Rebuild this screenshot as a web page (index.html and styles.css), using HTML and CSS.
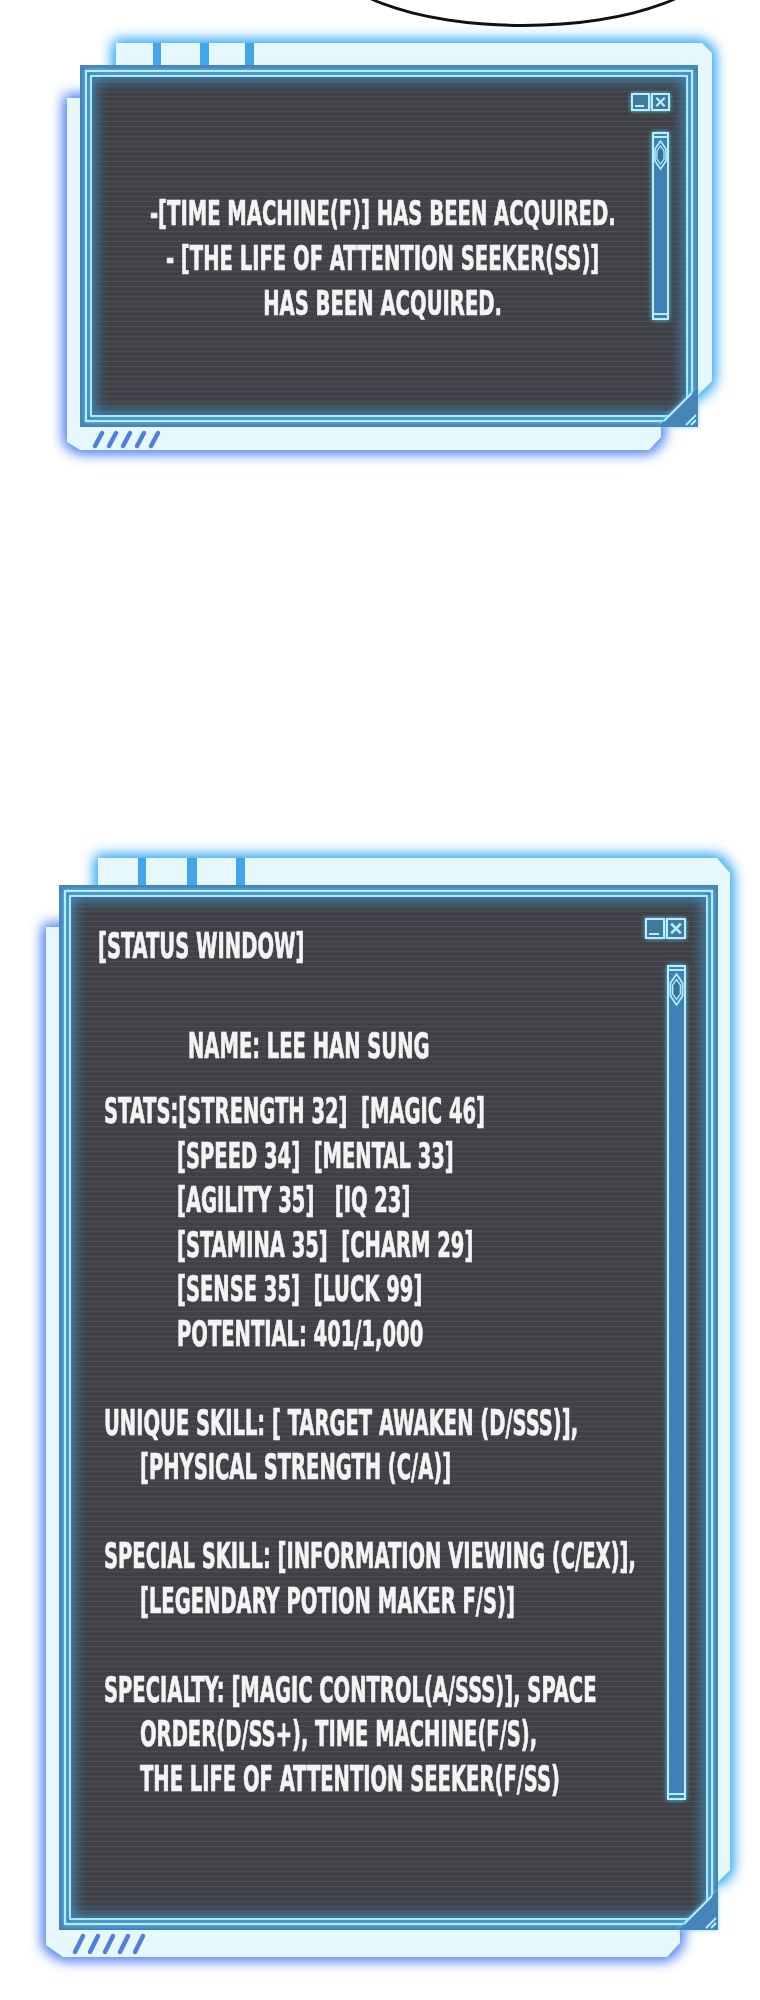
FILE: index.html
```html
<!DOCTYPE html>
<html lang="en">
<head>
<meta charset="utf-8">
<title>Status Window</title>
<link rel="stylesheet" href="styles.css">
</head>
<body>
<main class="page">

  <section class="win win-top">
    <svg class="frame" width="760" height="470" viewBox="0 0 760 470" aria-hidden="true">
      <defs>
        <filter id="glow1" x="-20%" y="-20%" width="140%" height="140%">
          <feMorphology operator="dilate" radius="2"/>
          <feGaussianBlur stdDeviation="7"/>
        </filter>
      </defs>
      <polygon points="67,98 661,98 661,437 649,450 80,450 67,442" fill="#4a7ef0" filter="url(#glow1)"/>
      <polygon points="67,98 661,98 661,437 649,450 80,450 67,442" fill="#4a7ef0" filter="url(#glow1)" opacity="0.6"/>
      <polygon points="116,43 702,43 712,53 712,381 697,396 116,396" fill="#33a6f2" filter="url(#glow1)"/>
      <polygon points="116,43 702,43 712,53 712,381 697,396 116,396" fill="#33a6f2" filter="url(#glow1)" opacity="0.6"/>
      <polygon points="67,98 661,98 661,437 649,450 80,450 67,442" fill="#e7f8fd"/>
      <polygon points="116,43 702,43 712,53 712,381 697,396 116,396" fill="#e7f8fd"/>
      <rect x="153" y="43" width="8" height="22" fill="#43a6ea"/>
      <rect x="200" y="43" width="9" height="22" fill="#43a6ea"/>
      <rect x="245" y="43" width="9" height="22" fill="#43a6ea"/>
      <g stroke="#4f80de" stroke-width="4.5" stroke-linecap="round">
        <line x1="95" y1="446" x2="102" y2="433"/>
        <line x1="109" y1="446" x2="116" y2="433"/>
        <line x1="123" y1="446" x2="130" y2="433"/>
        <line x1="137" y1="446" x2="144" y2="433"/>
        <line x1="151" y1="446" x2="158" y2="433"/>
      </g>
    </svg>
    <div class="bubble"></div>

    <div class="panel panel-top">
      <div class="rim">
        <div class="screen">
          <div class="body body-center">
            <div class="ln"><span>-[TIME MACHINE(F)] HAS BEEN ACQUIRED.</span></div>
            <div class="ln"><span>- [THE LIFE OF ATTENTION SEEKER(SS)]</span></div>
            <div class="ln"><span>HAS BEEN ACQUIRED.</span></div>
          </div>
          <aside class="side side-top">
            <div class="ctrls">
              <span class="btn btn-min"></span>
              <span class="btn btn-x"><svg viewBox="0 0 10 10"><path d="M2 2 L8 8 M8 2 L2 8"/></svg></span>
            </div>
            <div class="scroll">
              <span class="cap"></span>
              <svg class="knob" viewBox="0 0 13 30"><polygon class="outer" points="6.5,1 12,9 12,21 6.5,29 1,21 1,9"/><polygon class="inner" points="6.5,6 10,11 10,19 6.5,24 3,19 3,11"/></svg>
              <span class="cap end"></span>
            </div>
          </aside>
        </div>
      </div>
      <svg class="corner" viewBox="0 0 40 40" aria-hidden="true">
        <polygon points="40,0 40,40 0,40" fill="#4784b8"/>
        <path d="M34 6 L6 34 M29 11 L11 29 M38 28 L28 38 M38 33 L33 38" stroke="#b4f1ff" stroke-width="1.8" fill="none"/>
      </svg>
    </div>
  </section>

  <section class="win win-status">
    <svg class="frame" width="760" height="1170" viewBox="0 0 760 1170" aria-hidden="true">
      <defs>
        <filter id="glow2" x="-20%" y="-20%" width="140%" height="140%">
          <feMorphology operator="dilate" radius="2"/>
          <feGaussianBlur stdDeviation="7"/>
        </filter>
      </defs>
      <polygon points="46,97 680,97 680,1113 667,1127 63,1127 46,1115" fill="#4a7ef0" filter="url(#glow2)"/>
      <polygon points="46,97 680,97 680,1113 667,1127 63,1127 46,1115" fill="#4a7ef0" filter="url(#glow2)" opacity="0.6"/>
      <polygon points="98,28 717,28 730,43 730,1040 718,1052 98,1052" fill="#33a6f2" filter="url(#glow2)"/>
      <polygon points="98,28 717,28 730,43 730,1040 718,1052 98,1052" fill="#33a6f2" filter="url(#glow2)" opacity="0.6"/>
      <polygon points="46,97 680,97 680,1113 667,1127 63,1127 46,1115" fill="#e7f8fd"/>
      <polygon points="98,28 717,28 730,43 730,1040 718,1052 98,1052" fill="#e7f8fd"/>
      <rect x="138" y="28" width="8" height="27" fill="#43a6ea"/>
      <rect x="187" y="28" width="10" height="27" fill="#43a6ea"/>
      <rect x="236" y="28" width="9" height="27" fill="#43a6ea"/>
      <g stroke="#4f80de" stroke-width="4.5" stroke-linecap="round">
        <line x1="75" y1="1122" x2="83" y2="1106"/>
        <line x1="90" y1="1122" x2="98" y2="1106"/>
        <line x1="105" y1="1122" x2="113" y2="1106"/>
        <line x1="120" y1="1122" x2="128" y2="1106"/>
        <line x1="135" y1="1122" x2="143" y2="1106"/>
      </g>
    </svg>

    <div class="panel panel-status">
      <div class="rim">
        <div class="screen">
          <div class="body body-left">
            <div class="ln i0 after-title"><span>[STATUS WINDOW]</span></div>
            <div class="ln iname after-name"><span>NAME: LEE HAN SUNG</span></div>
            <div class="ln i1"><span>STATS:[STRENGTH 32]  [MAGIC 46]</span></div>
            <div class="ln i2"><span>[SPEED 34]  [MENTAL 33]</span></div>
            <div class="ln i2"><span>[AGILITY 35]   [IQ 23]</span></div>
            <div class="ln i2"><span>[STAMINA 35]  [CHARM 29]</span></div>
            <div class="ln i2"><span>[SENSE 35]  [LUCK 99]</span></div>
            <div class="ln i2"><span>POTENTIAL: 401/1,000</span></div>
            <div class="ln i1 gap"><span>UNIQUE SKILL: [ TARGET AWAKEN (D/SSS)],</span></div>
            <div class="ln i3"><span>[PHYSICAL STRENGTH (C/A)]</span></div>
            <div class="ln i1 gap"><span>SPECIAL SKILL: [INFORMATION VIEWING (C/EX)],</span></div>
            <div class="ln i3"><span>[LEGENDARY POTION MAKER F/S)]</span></div>
            <div class="ln i1 gap"><span>SPECIALTY: [MAGIC CONTROL(A/SSS)], SPACE</span></div>
            <div class="ln i3"><span>ORDER(D/SS+), TIME MACHINE(F/S),</span></div>
            <div class="ln i3"><span>THE LIFE OF ATTENTION SEEKER(F/SS)</span></div>
          </div>
          <aside class="side side-status">
            <div class="ctrls">
              <span class="btn btn-min"></span>
              <span class="btn btn-x"><svg viewBox="0 0 10 10"><path d="M2 2 L8 8 M8 2 L2 8"/></svg></span>
            </div>
            <div class="scroll">
              <span class="cap"></span>
              <svg class="knob" viewBox="0 0 13 30"><polygon class="outer" points="6.5,1 12,9 12,21 6.5,29 1,21 1,9"/><polygon class="inner" points="6.5,6 10,11 10,19 6.5,24 3,19 3,11"/></svg>
              <span class="cap end"></span>
            </div>
          </aside>
        </div>
      </div>
      <svg class="corner" viewBox="0 0 40 40" aria-hidden="true">
        <polygon points="40,0 40,40 0,40" fill="#4784b8"/>
        <path d="M34 6 L6 34 M29 11 L11 29 M38 28 L28 38 M38 33 L33 38" stroke="#b4f1ff" stroke-width="1.8" fill="none"/>
      </svg>
    </div>
  </section>

</main>
</body>
</html>
```

FILE: styles.css
```css
* { box-sizing: border-box; }

html, body {
  margin: 0;
  background: #ffffff;
}

body {
  font-family: "DejaVu Sans Condensed", "DejaVu Sans", "Liberation Sans", sans-serif;
  color: #f4f4f4;
}

.page {
  width: 760px;
  height: 2000px;
  overflow: hidden;
}

.win {
  position: relative;
}

.win-top {
  height: 470px;
  padding-top: 65px;
  padding-left: 80px;
}

.win-status {
  margin-top: 360px;
  height: 1170px;
  padding-top: 55px;
  padding-left: 59px;
}

.frame {
  position: absolute;
  left: 0;
  top: 0;
  overflow: visible;
  z-index: 0;
}

.bubble {
  position: absolute;
  left: 323px;
  top: -125px;
  width: 400px;
  height: 152px;
  border: 3px solid #111;
  border-radius: 50%;
  background: #fff;
  z-index: 1;
}

/* dark window */
.panel {
  position: relative;
  z-index: 2;
  background: #4784b8;
  padding: 5px;
}

.panel-top { width: 618px; height: 362px; }
.panel-status { width: 659px; height: 1045px; }

.rim {
  height: 100%;
  border: 2px solid #b4f1ff;
  padding: 3px;
  background: #3d7bb0;
  box-shadow: 0 0 4px rgba(120, 220, 255, 0.8), inset 0 0 3px rgba(120, 220, 255, 0.6);
}

.screen {
  height: 100%;
  display: flex;
  border: 2px solid #a6ebfb;
  background-color: #404247;
  background-image: repeating-linear-gradient(180deg, #3f4146 0px, #3f4146 4px, #4b4d53 4px, #4b4d53 5px);
  box-shadow: inset 0 0 14px 3px rgba(70, 150, 210, 0.85), 0 0 5px rgba(120, 220, 255, 0.7);
}

.corner {
  position: absolute;
  right: 0;
  bottom: 0;
  width: 40px;
  height: 40px;
  filter: drop-shadow(0 0 2px rgba(110, 215, 255, 0.9));
}

/* text */
.body {
  flex: 1;
  min-width: 0;
}

.ln {
  white-space: pre;
  font-weight: 700;
  -webkit-text-stroke: 0.7px #f4f4f4;
}

.ln > span {
  display: inline-block;
  transform: scaleX(var(--sx));
  transform-origin: 0 50%;
}

.body-center {
  padding: 114px 0 0 43px;
  --sx: 0.64;
}

.body-center .ln {
  display: flex;
  justify-content: center;
  height: 45px;
  line-height: 45px;
  font-size: 34px;
}

.body-center .ln > span {
  transform-origin: 50% 50%;
}

.body-left {
  padding-top: 27px;
  --sx: 0.62;
}

.body-left .ln {
  height: 44.5px;
  line-height: 44.5px;
  font-size: 35px;
}

.i0 { padding-left: 27px; }
.iname { padding-left: 117px; }
.i1 { padding-left: 33px; }
.i2 { padding-left: 106px; }
.i3 { padding-left: 69px; }

.after-title { margin-bottom: 55.5px; }
.after-name { margin-bottom: 20.5px; }
.gap { margin-top: 44.5px; }

/* side controls */
.side {
  display: flex;
  flex-direction: column;
  align-items: flex-end;
}

.side-top {
  width: 55px;
  padding: 16px 16px 0 0;
}

.side-status {
  width: 60px;
  padding: 21px 20px 0 0;
}

.ctrls {
  display: flex;
  gap: 1px;
  filter: drop-shadow(0 0 2px rgba(110, 215, 255, 0.9));
}

.btn {
  position: relative;
  display: block;
  width: 19px;
  height: 18px;
  border: 2px solid #b4f1ff;
  background: #45789f;
}

.side-status .btn {
  width: 20px;
  height: 21px;
}

.btn-min::after {
  content: "";
  position: absolute;
  left: 2px;
  right: 4px;
  bottom: 2px;
  height: 2px;
  background: #b4f1ff;
}

.btn-x svg {
  display: block;
  width: 100%;
  height: 100%;
}

.btn-x path {
  stroke: #b4f1ff;
  stroke-width: 1.6;
  fill: none;
}

.scroll {
  display: flex;
  flex-direction: column;
  align-items: center;
  border: 2px solid #b4f1ff;
  background: #3f80b6;
  box-shadow: 0 0 5px rgba(95, 207, 255, 0.9);
}

.side-top .scroll {
  width: 17px;
  height: 188px;
  margin-top: 21px;
  margin-right: 1px;
}

.side-status .scroll {
  width: 19px;
  height: 835px;
  margin-top: 26px;
}

.scroll .cap {
  display: block;
  align-self: stretch;
  height: 2px;
  margin-top: 2px;
  background: #b4f1ff;
}

.scroll .cap.end {
  margin-top: auto;
  margin-bottom: 3px;
}

.knob {
  display: block;
  width: 13px;
  height: 30px;
  margin-top: 2px;
}

.side-status .knob {
  width: 15px;
  height: 33px;
}

.knob .outer {
  fill: none;
  stroke: #b4f1ff;
  stroke-width: 1.6;
}

.knob .inner {
  fill: #3a6f9c;
  stroke: #b4f1ff;
  stroke-width: 1.2;
}
```
